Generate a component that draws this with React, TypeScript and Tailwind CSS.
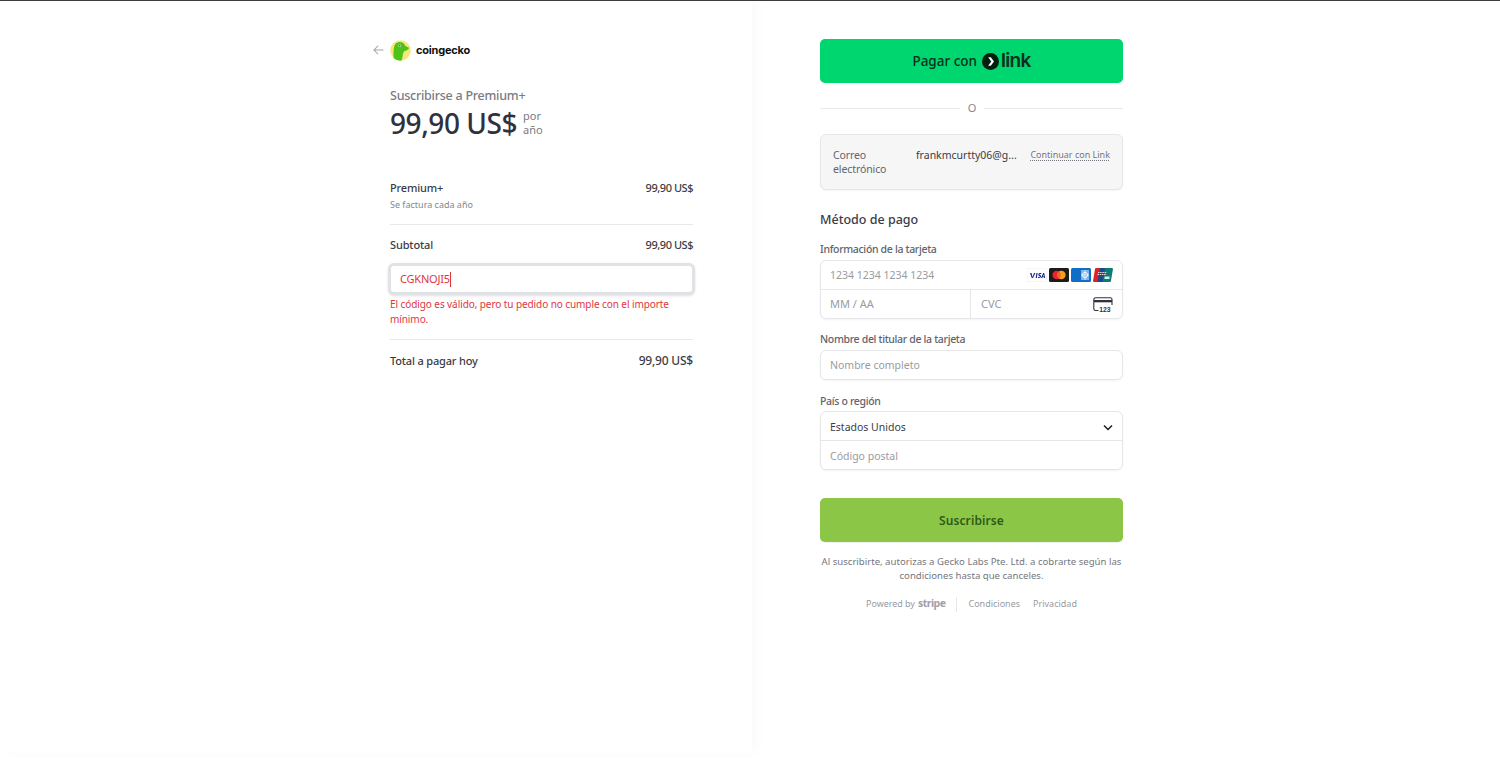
import React from "react";

function Row({ left, right, cls = "" }: { left: string; right: string; cls?: string }) {
  return (
    <div className={`flex justify-between items-center ${cls}`}>
      <span className="text-[11px] font-medium text-[#3b3c45] tracking-[-0.15px]">{left}</span>
      <span className="text-[11px] font-medium text-[#3b3c45] tracking-[-0.45px]">{right}</span>
    </div>
  );
}

function Label({ children, cls = "" }: { children: React.ReactNode; cls?: string }) {
  return <div className={`text-[10.5px] tracking-[-0.33px] leading-[16px] font-medium text-[#62636b] ${cls}`}>{children}</div>;
}

function Visa() {
  return (
    <svg width="20" height="14" viewBox="0 0 20 14">
      <rect x="0.25" y="0.25" width="19.5" height="13.5" rx="1.5" fill="#fff" stroke="#e4e6ee" strokeWidth="0.5" />
      <path d="M3 5h1.6l.8 4 1.7-4h1.3L6 10H4.7zM8.6 10l.9-5h1.2l-.9 5zM14.4 5.2l-.2 1c-1-.5-1.8-.3-1.8.1 0 .6 2 .8 1.7 2.3-.3 1.5-2.3 1.6-3.3 1.1l.2-1c.9.5 1.9.5 2-.1.1-.6-1.9-.8-1.7-2.2.2-1.4 2.1-1.6 3.1-1.2zM16.2 5h1l1 5h-1.1l-.1-.7h-1.5l-.3.7h-1.2zm0 3.4h1l-.3-1.8z" fill="#1a2a8f" />
    </svg>
  );
}

function Master() {
  return (
    <svg width="20" height="14" viewBox="0 0 20 14">
      <rect width="20" height="14" rx="1.5" fill="#1c1a1a" />
      <circle cx="7.6" cy="7" r="4.2" fill="#e8232a" />
      <circle cx="12.4" cy="7" r="4.2" fill="#f79e1b" />
      <path d="M10 3.6a4.2 4.2 0 0 1 0 6.8 4.2 4.2 0 0 1 0-6.8z" fill="#f26122" />
    </svg>
  );
}

function Amex() {
  return (
    <svg width="20" height="14" viewBox="0 0 20 14">
      <rect width="20" height="14" rx="1.5" fill="#0f6fc6" />
      <rect x="10" y="2" width="8" height="10" fill="#7fb6e6" />
      <path d="M10 7h8M14 2v10" stroke="#e6f1fb" strokeWidth="0.9" />
      <circle cx="14" cy="7" r="2.6" fill="none" stroke="#fff" strokeWidth="0.9" />
    </svg>
  );
}

function Union() {
  return (
    <svg width="20" height="14" viewBox="0 0 20 14">
      <path d="M3 0h6L6.5 14H1.2C.4 14-.1 13.4.1 12.600L2 1C2.100.4 2.500 0 3 0z" fill="#d8232a" />
      <path d="M7 0h6l-2.500 14h-6z" fill="#1b4a8c" />
      <path d="M12 0h6.800c.800 0 1.300.600 1.100 1.400L17.900 13c-.1.600-.600 1-1.200 1H9.500z" fill="#0c7b73" />
      <path d="M5 4.500h9M4.500 6.500h9" stroke="#f3d9d9" strokeWidth="1" strokeDasharray="1.500 .7" />
      <rect x="11.500" y="8.500" width="5" height="2.500" fill="#d5efe9" />
    </svg>
  );
}

function CvcIcon() {
  return (
    <svg width="20" height="15" viewBox="0 0 20 15">
      <path d="M5.500 13.500H2.500A1.700 1.700 0 0 1 .8 11.800V2.500A1.700 1.700 0 0 1 2.500.8h14.800A1.700 1.700 0 0 1 19 2.500V8" fill="none" stroke="#30313d" strokeWidth="1.100" />
      <rect x="1" y="3" width="18" height="2.300" fill="#30313d" />
      <text x="6.300" y="14.500" fontSize="6.800" fontWeight="700" fill="#30313d" fontFamily="'Liberation Sans', sans-serif">123</text>
    </svg>
  );
}

function Gecko() {
  return (
    <svg width="21" height="21" viewBox="0 0 21 21">
      <defs>
        <clipPath id="geckoClip"><circle cx="10.500" cy="10.500" r="10.300" /></clipPath>
      </defs>
      <circle cx="10.500" cy="10.500" r="10.300" fill="#f6e77a" />
      <g clipPath="url(#geckoClip)">
        <path d="M4 21C3 15 3.300 8 5 4.500 6.500 1.800 10 1.300 12.300 2.600c1.800 1 2.500 2.500 3 3.300 1.200.5 3.500 1.300 3.700 1.900.1 1-1.800 2.600-4.200 3.300-1 .3-1.700 1.800-1.900 3.200-.3 2.500-.6 4.800-1.800 7z" fill="#4cc21a" />
      </g>
      <circle cx="9.800" cy="5.800" r="1.300" fill="#fff" />
      <circle cx="9.800" cy="5.800" r="0.800" fill="#1d3b12" />
    </svg>
  );
}

function LinkMark() {
  return (
    <svg width="17" height="17" viewBox="0 0 17 17">
      <circle cx="8.500" cy="8.500" r="8.500" fill="#011e0f" />
      <path d="M6.200 4.300h2.600l3.200 4.200-3.200 4.200H6.200l3.100-4.200z" fill="#fff" />
    </svg>
  );
}

export default function App() {
  return (
    <div className="h-[759px] w-[1500px] overflow-hidden bg-white border-t border-[#3c3c3c] font-['Noto_Sans','Open_Sans',sans-serif] flex items-start">
      <div className="w-[752px] h-[752px] flex justify-end shadow-[5px_0_10px_rgba(0,0,0,0.025)] pr-[59px] shrink-0">
        <div className="w-[303px] relative">
          <div className="flex items-center h-[22px] mt-[38px]">
            <svg className="absolute left-[-17px] text-[#a3a3a8]" width="11" height="12" viewBox="0 0 12 12" fill="none">
              <path d="M11.500 6H1M5.500 1.500 1 6l4.500 4.500" stroke="currentColor" strokeWidth="1.100" />
            </svg>
            <Gecko />
            <span className="ml-[5px] text-[11px] font-bold text-[#111] font-['Inter','Noto_Sans',sans-serif] tracking-[-0.2px]">coingecko</span>
          </div>
          <div className="mt-[25px] text-[12.5px] tracking-[-0.25px] leading-[20px] font-medium text-[#7a7b82]">Suscribirse a Premium+</div>
          <div className="flex items-center h-[34px]">
            <span className="text-[28px] leading-[36px] font-medium text-[#30313d] tracking-[-0.45px]">99,90 US$</span>
            <span className="ml-[6px] text-[11px] leading-[14px] text-[#7a7b82] -mt-[1px]">por<br />año</span>
          </div>
          <Row left="Premium+" right="99,90 US$" cls="mt-[39px] h-[18px]" />
          <div className="mt-[1px] text-[9px] leading-[14px] text-[#85868c]">Se factura cada año</div>
          <div className="mt-[12px] h-px bg-[#e9e9ec]" />
          <Row left="Subtotal" right="99,90 US$" cls="mt-[11px] h-[18px]" />
          <div className="mt-[9px] h-[32px] -mx-[2px] rounded-[6px] border-[3px] border-[#e1e2e5] bg-white flex items-center pl-[9px] shadow-sm">
            <span className="text-[11px] text-[#e0353f] tracking-[-0.2px]">CGKNOJI5</span>
            <span className="w-px h-[15px] bg-[#e0353f]" />
          </div>
          <div className="text-[10px] leading-[15px] text-[#e0353f] tracking-[-0.08px] pr-[8px] pt-[2px]">
            El código es válido, pero tu pedido no cumple con el importe mínimo.
          </div>
          <div className="mt-[12px] h-px bg-[#e9e9ec]" />
          <div className="flex justify-between items-center mt-[11px] h-[20px]">
            <span className="text-[11px] font-medium text-[#3b3c45] tracking-[-0.17px]">Total a pagar hoy</span>
            <span className="text-[12px] font-medium text-[#3b3c45] tracking-[-0.2px]">99,90 US$</span>
          </div>
        </div>
      </div>

      <div className="ml-[68px] w-[303px] shrink-0 pt-[38px]">
        <button className="w-full h-[44px] rounded-[5px] bg-[#00d66f] flex items-center justify-center text-[#0a2e1a]">
          <span className="text-[13.500px] font-medium">Pagar con</span>
          <span className="ml-[5px]"><LinkMark /></span>
          <span className="ml-[2px] text-[19px] leading-[20px] font-semibold tracking-[-0.7px] font-['Inter',sans-serif]">link</span>
        </button>
        <div className="flex items-center mt-[16px] h-[18px]">
          <div className="w-[140px] h-px bg-[#e9e9ec]" />
          <span className="flex-1 text-center text-[11px] text-[#85868c]">O</span>
          <div className="w-[139px] h-px bg-[#e9e9ec]" />
        </div>
        <div className="mt-[17px] h-[56px] rounded-[6px] border border-[#e6e6e9] bg-[#f6f6f7] shadow-[0_1px_1px_rgba(0,0,0,0.04)] flex items-start pl-[12px] pr-[12px] pt-[13px]">
          <div className="w-[83px] text-[10.500px] leading-[14px] text-[#62636b] tracking-[-0.1px]">Correo electrónico</div>
          <div className="text-[10.500px] leading-[14px] text-[#3b3c45] whitespace-nowrap">frankmcurtty06@g...</div>
          <div className="ml-auto text-[9px] leading-[14px] text-[#75767d] underline decoration-dotted underline-offset-2 whitespace-nowrap">Continuar con Link</div>
        </div>
        <div className="mt-[20px] text-[12.500px] leading-[20px] font-medium text-[#3b3c45]">Método de pago</div>
        <Label cls="mt-[11px]">Información de la tarjeta</Label>
        <div className="mt-[3px] h-[59px] rounded-[6px] border border-[#e6e6e9] shadow-[0_1px_2px_rgba(0,0,0,0.05)] flex flex-col">
          <div className="h-[29px] flex items-center justify-between pl-[9px] pr-[9px] pt-[1px] border-b border-[#e6e6e9]">
            <span className="text-[10.500px] text-[#9a9ba1]">1234 1234 1234 1234</span>
            <span className="flex gap-[2px] -mt-[1px]"><Visa /><Master /><Amex /><Union /></span>
          </div>
          <div className="flex-1 flex">
            <div className="w-[150px] flex items-center pl-[9px] border-r border-[#e6e6e9] text-[11px] text-[#9a9ba1]">MM / AA</div>
            <div className="flex-1 flex items-center justify-between pl-[10px] pr-[9px] text-[11px] text-[#9a9ba1]">
              <span>CVC</span>
              <CvcIcon />
            </div>
          </div>
        </div>
        <Label cls="mt-[12px]">Nombre del titular de la tarjeta</Label>
        <div className="mt-[3px] h-[30px] rounded-[6px] border border-[#e6e6e9] shadow-[0_1px_2px_rgba(0,0,0,0.05)] flex items-center pl-[9px] pt-[1px] text-[10.500px] text-[#9a9ba1]">Nombre completo</div>
        <Label cls="mt-[13px]">País o región</Label>
        <div className="mt-[2px] h-[59px] rounded-[6px] border border-[#e6e6e9] shadow-[0_1px_2px_rgba(0,0,0,0.05)] flex flex-col">
          <div className="h-[29px] flex items-center justify-between pl-[9px] pr-[9px] pt-[3px] border-b border-[#e6e6e9] text-[10.500px] text-[#3b3c45]">
            <span>Estados Unidos</span>
            <svg width="10" height="7" viewBox="0 0 10 7" fill="none"><path d="M1 1.500 5 5.500 9 1.500" stroke="#1a1a22" strokeWidth="1.500" /></svg>
          </div>
          <div className="flex-1 flex items-center pl-[9px] pt-[3px] text-[10.500px] text-[#9a9ba1]">Código postal</div>
        </div>
        <button className="mt-[28px] w-full h-[44px] rounded-[5px] bg-[#8cc647] shadow-[0_1px_1px_rgba(0,0,0,0.06)] text-[12px] font-semibold text-[#2f5a18] tracking-[0.1px] pt-[1px]">Suscribirse</button>
        <div className="mt-[13px] text-center text-[9.600px] leading-[14px] text-[#75767d]">
          Al suscribirte, autorizas a Gecko Labs Pte. Ltd. a cobrarte según las condiciones hasta que canceles.
        </div>
        <div className="mt-[13px] flex items-center justify-center h-[16px] text-[9px] text-[#9a9ba1]">
          <span className="tracking-[-0.05px]">Powered by</span>
          <span className="ml-[3px] text-[10.500px] font-bold text-[#a0a1a7] tracking-[-0.5px]">stripe</span>
          <span className="mx-[11px] w-px h-[15px] bg-[#e6e6e9]" />
          <span>Condiciones</span>
          <span className="ml-[13px]">Privacidad</span>
        </div>
      </div>
    </div>
  );
}
